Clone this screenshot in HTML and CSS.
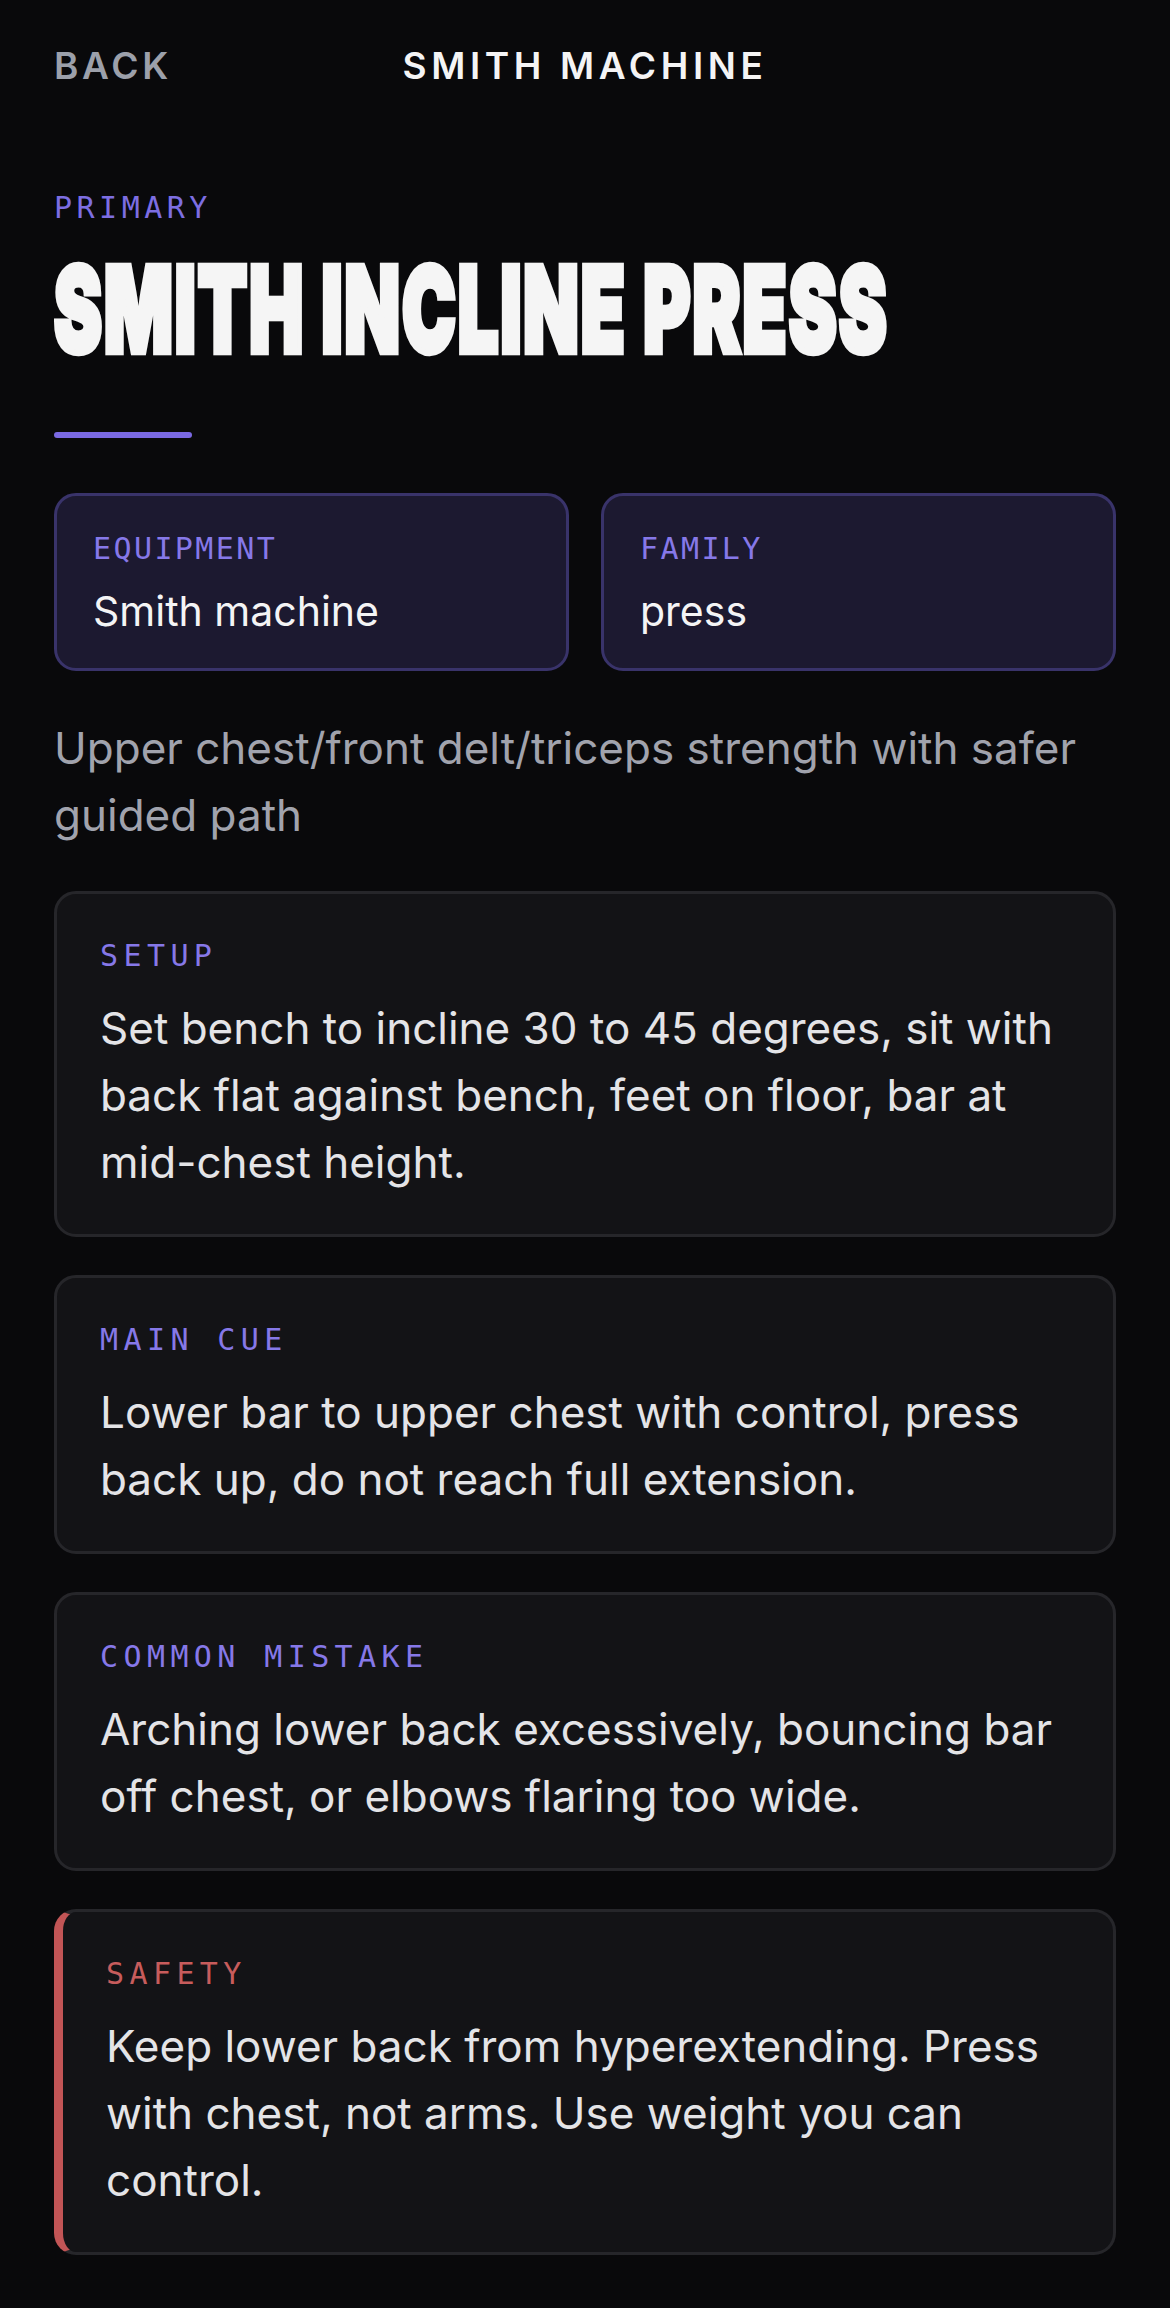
FILE: index.html
```html
<!DOCTYPE html>
<html lang="en">
<head>
  <meta charset="UTF-8">
  <meta name="viewport" content="width=device-width, initial-scale=1.0">
  <title>Smith Incline Press</title>
  <link rel="stylesheet" href="styles.css">
</head>
<body>
  <header class="topbar">
    <a class="back" href="#">BACK</a>
    <div class="screen-title">SMITH MACHINE</div>
    <span></span>
  </header>

  <main class="detail">
    <div class="tier">PRIMARY</div>
    <h1 class="name">SMITH INCLINE PRESS</h1>
    <div class="accent"></div>

    <div class="facts">
      <div class="fact">
        <div class="label">EQUIPMENT</div>
        <div class="fact-value">Smith machine</div>
      </div>
      <div class="fact">
        <div class="label">FAMILY</div>
        <div class="fact-value">press</div>
      </div>
    </div>

    <p class="summary">Upper chest/front delt/triceps strength with safer guided path</p>

    <section class="note">
      <div class="label">SETUP</div>
      <p>Set bench to incline 30 to 45 degrees, sit with back flat against bench, feet on floor, bar at mid-chest height.</p>
    </section>

    <section class="note">
      <div class="label">MAIN CUE</div>
      <p>Lower bar to upper chest with control, press back up, do not reach full extension.</p>
    </section>

    <section class="note">
      <div class="label">COMMON MISTAKE</div>
      <p>Arching lower back excessively, bouncing bar off chest, or elbows flaring too wide.</p>
    </section>

    <section class="note note-safety">
      <div class="label">SAFETY</div>
      <p>Keep lower back from hyperextending. Press with chest, not arms. Use weight you can control.</p>
    </section>
  </main>
</body>
</html>
```

FILE: styles.css
```css
body {
  margin: 0;
  background: #09090b;
  color: #e4e4e7;
  font-family: 'Inter', 'Noto Sans', sans-serif;
}

/* top bar */
.topbar {
  display: grid;
  grid-template-columns: 1fr auto 1fr;
  align-items: center;
  padding: 44px 54px 0;
  font-size: 37px;
  line-height: 44px;
  font-weight: 600;
  letter-spacing: 0.12em;
}
.back {
  color: #9ca0aa;
  text-decoration: none;
  letter-spacing: 0.1em;
}
.screen-title {
  color: #f4f4f5;
  letter-spacing: 0.125em;
}

.detail {
  padding: 0 54px 14px;
}

/* small mono captions */
.label {
  font-family: 'DejaVu Sans Mono', monospace;
  font-size: 30px;
  line-height: 40px;
  letter-spacing: 0.18em;
  color: #8678e8;
}

.tier {
  margin-top: 100px;
  font-family: 'DejaVu Sans Mono', monospace;
  font-size: 30px;
  line-height: 40px;
  letter-spacing: 0.15em;
  color: #7d6ee2;
}

/* condensed display heading: heavy face stretched tall */
.name {
  margin: 22px 0 0;
  font-size: 72px;
  line-height: 72px;
  font-weight: 900;
  letter-spacing: 2px;
  white-space: nowrap;
  color: #f5f5f5;
  -webkit-text-stroke: 4px #f5f5f5;
  transform: scaleY(1.645);
  transform-origin: left top;
}

.accent {
  margin-top: 110px;
  width: 138px;
  height: 6px;
  border-radius: 3px;
  background: #7a69e3;
}

/* equipment / family */
.facts {
  margin-top: 55px;
  display: grid;
  grid-template-columns: 1fr 1fr;
  gap: 32px;
}
.fact {
  background: #1c1930;
  border: 3px solid #39336a;
  border-radius: 22px;
  padding: 33px 36px;
}
.fact .label {
  margin-bottom: 18px;
  letter-spacing: 0.08em;
}
.fact-value {
  font-size: 41px;
  line-height: 48px;
  color: #f4f4f5;
}

.summary {
  margin: 44px 0 42px;
  font-size: 44px;
  line-height: 67px;
  color: #a1a3ad;
}

/* instruction cards */
.note {
  background: #131316;
  border: 3px solid #26262a;
  border-radius: 22px;
  padding: 42px 42px 38px 43px;
  margin-bottom: 38px;
}
.note .label {
  margin-bottom: 19px;
}
.note p {
  margin: 0;
  font-size: 44px;
  line-height: 67px;
  color: #e4e4e7;
}

.note-safety {
  border-left: 9px solid #c25556;
}
.note-safety .label {
  color: #c75c5c;
}
```
